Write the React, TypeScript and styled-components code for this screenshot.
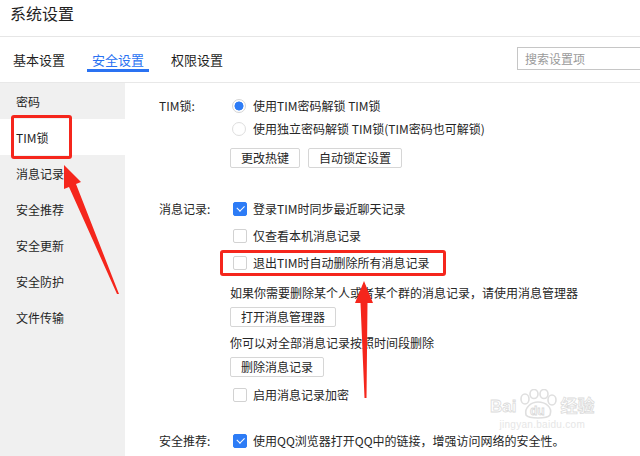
import styled, { createGlobalStyle } from "styled-components";

const GlobalStyle = createGlobalStyle`
  html, body {
    margin: 0;
    padding: 0;
    background: #fff;
  }
  body {
    font-family: "Noto Sans CJK SC", "Noto Sans", sans-serif;
    color: #262626;
  }
`;

const navItems = ["密码", "TIM锁", "消息记录", "安全推荐", "安全更新", "安全防护", "文件传输"];
const tabs = ["基本设置", "安全设置", "权限设置"];

export default function App() {
  return (
    <Page>
      <GlobalStyle />
      <TitleBar>系统设置</TitleBar>

      <TabBar>
        {tabs.map((t) => (
          <Tab key={t} $active={t === "安全设置"}>
            {t}
          </Tab>
        ))}
        <SearchBox placeholder="搜索设置项" />
      </TabBar>

      <Body>
        <Sidebar>
          {navItems.map((n) => (
            <NavItem key={n} $active={n === "TIM锁"}>
              {n}
            </NavItem>
          ))}
        </Sidebar>

        <Content>
          <Section $top={11}>
            <Label $h={23}>TIM锁:</Label>
            <Controls>
              <OptionRow $h={23}>
                <Radio $checked />
                使用TIM密码解锁 TIM锁
              </OptionRow>
              <OptionRow $h={23}>
                <Radio />
                使用独立密码解锁 TIM锁(TIM密码也可解锁)
              </OptionRow>
              <ButtonRow $top={8}>
                <Button>更改热键</Button>
                <Button>自动锁定设置</Button>
              </ButtonRow>
            </Controls>
          </Section>

          <Section $top={27}>
            <Label $h={27}>消息记录:</Label>
            <Controls>
              <OptionRow $h={27}>
                <Check $checked />
                登录TIM时同步最近聊天记录
              </OptionRow>
              <OptionRow $h={27}>
                <Check />
                仅查看本机消息记录
              </OptionRow>
              <OptionRow $h={27}>
                <Check />
                退出TIM时自动删除所有消息记录
              </OptionRow>
              <Note $top={4}>如果你需要删除某个人或者某个群的消息记录，请使用消息管理器</Note>
              <ButtonRow $top={3}>
                <Button>打开消息管理器</Button>
              </ButtonRow>
              <Note $top={3}>你可以对全部消息记录按照时间段删除</Note>
              <ButtonRow $top={3}>
                <Button>删除消息记录</Button>
              </ButtonRow>
              <OptionRow $h={27} $top={4}>
                <Check />
                启用消息记录加密
              </OptionRow>
            </Controls>
          </Section>

          <Section $top={19}>
            <Label $h={27}>安全推荐:</Label>
            <Controls>
              <OptionRow $h={27}>
                <Check $checked />
                使用QQ浏览器打开QQ中的链接，增强访问网络的安全性。
              </OptionRow>
            </Controls>
          </Section>
        </Content>
      </Body>

      <Watermark>
        <WmLine>
          <WmWord>Bai</WmWord>
          <svg width="44" height="30" viewBox="0 0 44 30">
            <g fill="none" stroke="#dcdcdc" strokeWidth="1.6">
              <ellipse cx="9" cy="10" rx="4" ry="5" />
              <ellipse cx="18" cy="5" rx="4" ry="4.5" />
              <ellipse cx="28" cy="5" rx="4" ry="4.5" />
              <ellipse cx="36" cy="11" rx="4" ry="5" />
              <path d="M10 26 C8 18 16 13 22 13 C29 13 37 18 34 26 C31 30 13 30 10 26 Z" />
            </g>
            <text x="14" y="26" fontSize="12" fontFamily="Liberation Sans, sans-serif" fontWeight="700" fill="#fff" stroke="#d6d6d6" strokeWidth="0.8">du</text>
          </svg>
          <WmWord>经验</WmWord>
        </WmLine>
        <WmUrl>jingyan.baidu.com</WmUrl>
      </Watermark>

      <Highlight style={{ left: 11, top: 115, width: 61, height: 44 }} />
      <Highlight style={{ left: 220, top: 250, width: 226, height: 26 }} />

      <ArrowLayer width="640" height="456" viewBox="0 0 640 456">
        <polygon
          fill="#f5261c"
          points="64,165 81,182 76,184 119,294 117,294 69,187 64,189"
        />
        <polygon
          fill="#f5261c"
          points="364,281 373,303 367.5,303 366.5,398 364.5,398 360.5,303 355,303"
        />
      </ArrowLayer>
    </Page>
  );
}

const Page = styled.div`
  position: relative;
  width: 640px;
  height: 456px;
  overflow: hidden;
  display: flex;
  flex-direction: column;
  background: #fff;
`;

const TitleBar = styled.div`
  height: 36px;
  flex-shrink: 0;
  border-bottom: 1px solid #e6e6e6;
  padding-left: 10px;
  font-size: 16px;
  line-height: 26px;
  color: #1f1f1f;
`;

const TabBar = styled.div`
  height: 45px;
  flex-shrink: 0;
  display: flex;
  align-items: flex-start;
  gap: 17px;
  padding-left: 8px;
  border-bottom: 1px solid #e8e8e8;
`;

const Tab = styled.div<{ $active?: boolean }>`
  padding: 14px 5px 1px;
  font-size: 13px;
  line-height: 17px;
  color: ${(p) => (p.$active ? "#2a72f2" : "#1f1f1f")};
  border-bottom: 3px solid ${(p) => (p.$active ? "#2a72f2" : "transparent")};
`;

const SearchBox = styled.input`
  margin: 10px -8px 0 auto;
  width: 131px;
  height: 23px;
  box-sizing: border-box;
  border: 1px solid #c6c6c6;
  padding: 0 7px;
  font-family: inherit;
  font-size: 12px;
  outline: none;
  &::placeholder {
    color: #9a9a9a;
  }
`;

const Body = styled.div`
  flex: 1;
  display: flex;
  min-height: 0;
`;

const Sidebar = styled.div`
  width: 125px;
  flex-shrink: 0;
  background: #f0f0f0;
`;

const NavItem = styled.div<{ $active?: boolean }>`
  height: 36px;
  display: flex;
  align-items: center;
  padding-left: 16px;
  font-size: 12px;
  color: #1f1f1f;
  background: ${(p) => (p.$active ? "#fff" : "transparent")};
`;

const Content = styled.div`
  flex: 1;
  padding-left: 34px;
`;

const Section = styled.div<{ $top: number }>`
  display: grid;
  grid-template-columns: 71px 1fr;
  margin-top: ${(p) => p.$top}px;
`;

const Label = styled.div<{ $h: number }>`
  height: ${(p) => p.$h}px;
  display: flex;
  align-items: center;
  font-size: 12px;
  color: #262626;
`;

const Controls = styled.div`
  display: flex;
  flex-direction: column;
`;

const OptionRow = styled.div<{ $h: number; $top?: number }>`
  height: ${(p) => p.$h}px;
  margin-top: ${(p) => p.$top ?? 0}px;
  display: flex;
  align-items: center;
  font-size: 12px;
  color: #262626;
  white-space: nowrap;
`;

const Radio = styled.span<{ $checked?: boolean }>`
  width: 14px;
  height: 14px;
  box-sizing: border-box;
  margin: 0 7px 0 2px;
  border-radius: 50%;
  border: 1px solid ${(p) => (p.$checked ? "#d4d4d4" : "#dedede")};
  background: ${(p) =>
    p.$checked ? "radial-gradient(circle, #2d7cf6 0 4.2px, #fff 4.8px)" : "#fff"};
  flex-shrink: 0;
`;

const Check = styled.span<{ $checked?: boolean }>`
  width: 14px;
  height: 14px;
  box-sizing: border-box;
  margin: 0 6px 0 3px;
  border-radius: 2px;
  border: 1px solid ${(p) => (p.$checked ? "#2d7cf6" : "#d2d2d2")};
  background: ${(p) => (p.$checked ? "#2d7cf6" : "#fff")};
  flex-shrink: 0;
  position: relative;
  &::after {
    content: "";
    display: ${(p) => (p.$checked ? "block" : "none")};
    position: absolute;
    left: 3px;
    top: 2px;
    width: 6px;
    height: 3.5px;
    border-left: 1.5px solid #fff;
    border-bottom: 1.5px solid #fff;
    transform: rotate(-45deg);
  }
`;

const ButtonRow = styled.div<{ $top: number }>`
  display: flex;
  gap: 8px;
  margin-top: ${(p) => p.$top}px;
`;

const Button = styled.button`
  height: 20px;
  box-sizing: border-box;
  padding: 0 10px;
  border: 1px solid #d6d6d6;
  border-radius: 2px;
  background: #fff;
  font-family: inherit;
  font-size: 12px;
  line-height: 18px;
  color: #262626;
`;

const Note = styled.div<{ $top: number }>`
  height: 24px;
  margin-top: ${(p) => p.$top}px;
  display: flex;
  align-items: center;
  font-size: 12px;
  color: #262626;
  white-space: nowrap;
`;

const Highlight = styled.div`
  position: absolute;
  box-sizing: border-box;
  border: 3px solid #f5261c;
  border-radius: 3px;
`;

const ArrowLayer = styled.svg`
  position: absolute;
  left: 0;
  top: 0;
  pointer-events: none;
`;

const Watermark = styled.div`
  position: absolute;
  left: 490px;
  top: 389px;
  display: flex;
  flex-direction: column;
  align-items: center;
  opacity: 0.9;
`;

const WmLine = styled.div`
  display: flex;
  align-items: flex-end;
`;

const WmWord = styled.span`
  font-family: "Liberation Sans", "Noto Sans CJK SC", sans-serif;
  font-size: 17px;
  font-weight: 700;
  line-height: 20px;
  color: #fff;
  -webkit-text-stroke: 0.8px #d8d8d8;
  padding-bottom: 2px;
`;

const WmUrl = styled.span`
  font-family: "Liberation Sans", sans-serif;
  font-size: 10px;
  line-height: 11px;
  color: #e4e4e4;
  letter-spacing: 0.3px;
`;
